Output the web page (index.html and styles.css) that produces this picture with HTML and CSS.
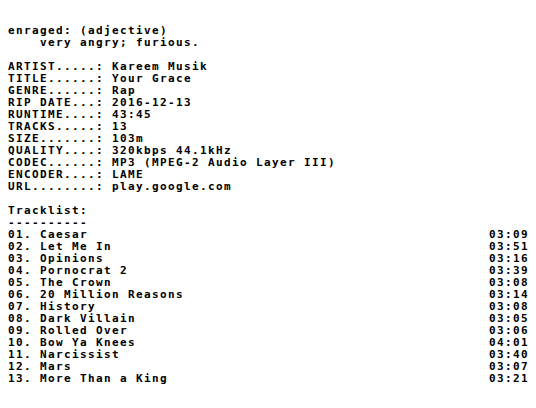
FILE: index.html
```html
<!DOCTYPE html>
<html lang="en">
<head>
<meta charset="utf-8">
<title>Kareem Musik - Your Grace</title>
<link rel="stylesheet" href="styles.css">
</head>
<body>
<main class="nfo">
  <section class="definition">
    <p class="line">enraged: (adjective)</p>
    <p class="line indent">very angry; furious.</p>
  </section>

  <dl class="meta">
    <div class="row"><dt>ARTIST.....:</dt><dd>Kareem Musik</dd></div>
    <div class="row"><dt>TITLE......:</dt><dd>Your Grace</dd></div>
    <div class="row"><dt>GENRE......:</dt><dd>Rap</dd></div>
    <div class="row"><dt>RIP DATE...:</dt><dd>2016-12-13</dd></div>
    <div class="row"><dt>RUNTIME....:</dt><dd>43:45</dd></div>
    <div class="row"><dt>TRACKS.....:</dt><dd>13</dd></div>
    <div class="row"><dt>SIZE.......:</dt><dd>103m</dd></div>
    <div class="row"><dt>QUALITY....:</dt><dd>320kbps 44.1kHz</dd></div>
    <div class="row"><dt>CODEC......:</dt><dd>MP3 (MPEG-2 Audio Layer III)</dd></div>
    <div class="row"><dt>ENCODER....:</dt><dd>LAME</dd></div>
    <div class="row"><dt>URL........:</dt><dd>play.google.com</dd></div>
  </dl>

  <section class="tracklist">
    <h2 class="heading">Tracklist:</h2>
    <div class="rule">----------</div>
    <ol class="tracks">
      <li class="track"><span class="title">01. Caesar</span><span class="time">03:09</span></li>
      <li class="track"><span class="title">02. Let Me In</span><span class="time">03:51</span></li>
      <li class="track"><span class="title">03. Opinions</span><span class="time">03:16</span></li>
      <li class="track"><span class="title">04. Pornocrat 2</span><span class="time">03:39</span></li>
      <li class="track"><span class="title">05. The Crown</span><span class="time">03:08</span></li>
      <li class="track"><span class="title">06. 20 Million Reasons</span><span class="time">03:14</span></li>
      <li class="track"><span class="title">07. History</span><span class="time">03:08</span></li>
      <li class="track"><span class="title">08. Dark Villain</span><span class="time">03:05</span></li>
      <li class="track"><span class="title">09. Rolled Over</span><span class="time">03:06</span></li>
      <li class="track"><span class="title">10. Bow Ya Knees</span><span class="time">04:01</span></li>
      <li class="track"><span class="title">11. Narcissist</span><span class="time">03:40</span></li>
      <li class="track"><span class="title">12. Mars</span><span class="time">03:07</span></li>
      <li class="track"><span class="title">13. More Than a King</span><span class="time">03:21</span></li>
    </ol>
  </section>
</main>
</body>
</html>
```
FILE: styles.css
```css
html {
  background: #ffffff;
}

body {
  margin: 8px;
  color: #000000;
  font-family: "DejaVu Sans Mono", "Liberation Mono", monospace;
  font-weight: bold;
  font-size: 11px;
  letter-spacing: 1.38px;
  line-height: 12px;
}

.nfo {
  display: flex;
  flex-direction: column;
  gap: 12px;
  padding-top: 17px;
}

.definition {
  display: flex;
  flex-direction: column;
}

.line {
  margin: 0;
  white-space: pre;
}

.indent {
  padding-left: 32px;
}

.meta {
  margin: 0;
  display: flex;
  flex-direction: column;
}

.row {
  display: flex;
  gap: 8px;
  white-space: pre;
}

.row dt,
.row dd {
  margin: 0;
}

.tracklist {
  display: flex;
  flex-direction: column;
}

.heading {
  margin: 0;
  font-size: inherit;
  font-weight: inherit;
}

.rule {
  white-space: pre;
}

.tracks {
  margin: 0;
  padding: 0;
  list-style: none;
  display: flex;
  flex-direction: column;
}

.track {
  display: flex;
  justify-content: space-between;
  white-space: pre;
}

.time {
  margin-right: -1px;
}
```
